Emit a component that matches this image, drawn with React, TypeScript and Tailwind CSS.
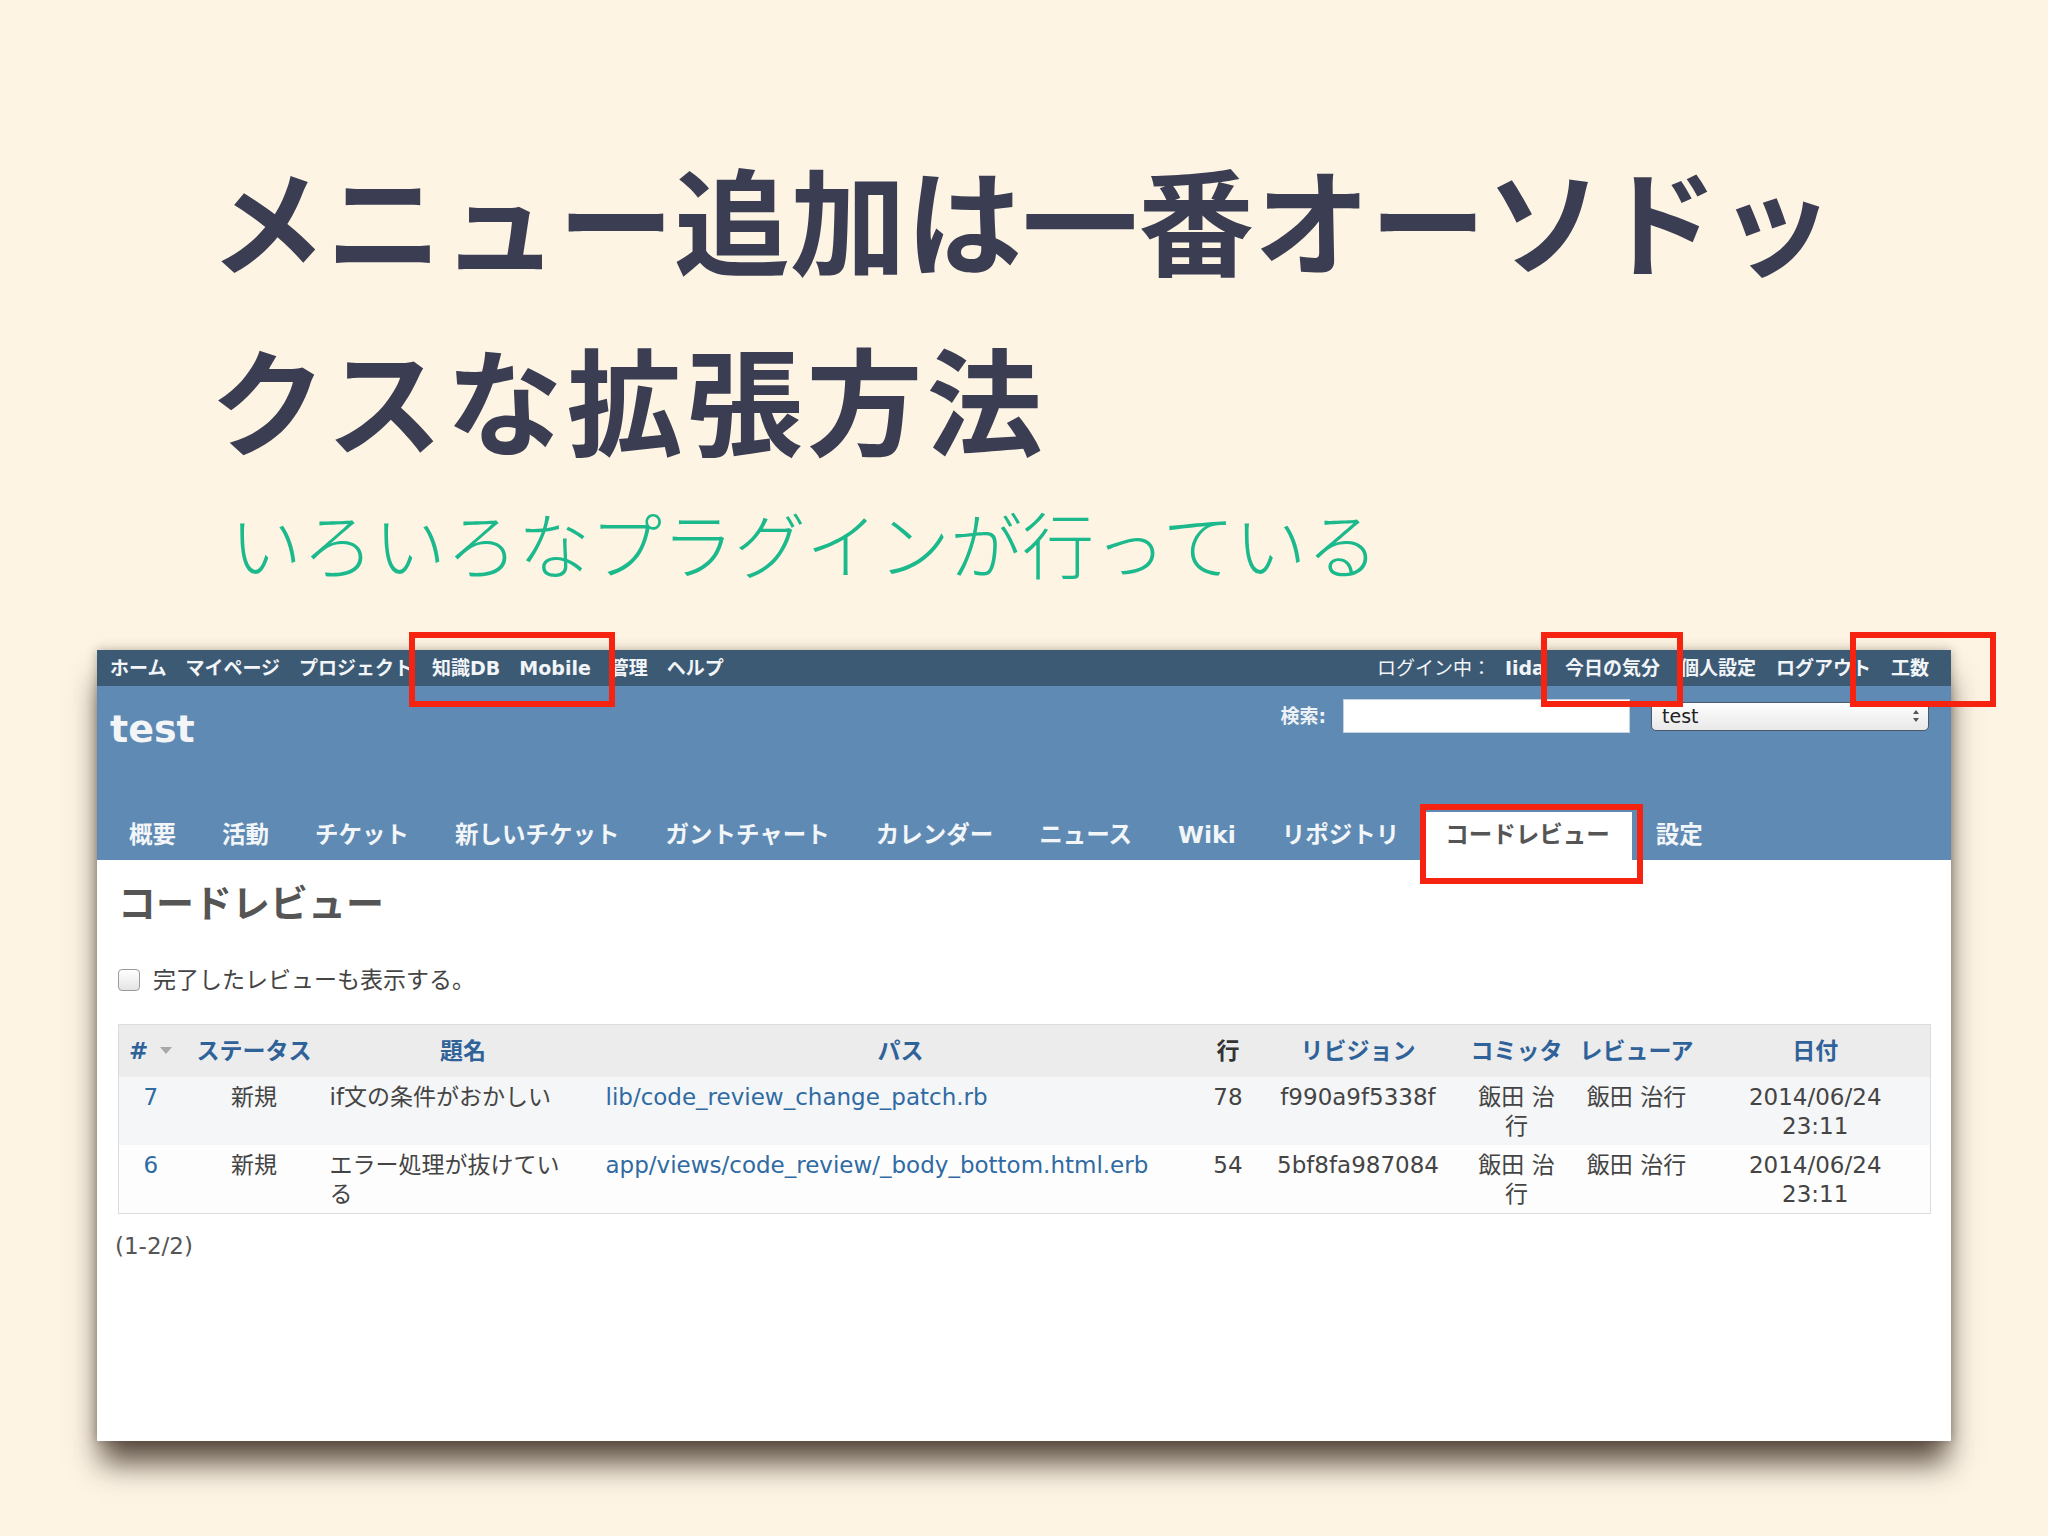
import React from 'react';

const leftMenu = ['ホーム', 'マイページ', 'プロジェクト', '知識DB', 'Mobile', '管理', 'ヘルプ'];
const rightMenu = ['今日の気分', '個人設定', 'ログアウト', '工数'];
const tabs = ['概要', '活動', 'チケット', '新しいチケット', 'ガントチャート', 'カレンダー', 'ニュース', 'Wiki', 'リポジトリ', 'コードレビュー', '設定'];

const rows = [
  { id: '7', status: '新規', subject: 'if文の条件がおかしい', path: 'lib/code_review_change_patch.rb', line: '78', rev: 'f990a9f5338f', committer: '飯田 治行', reviewer: '飯田 治行', date: '2014/06/24 23:11' },
  { id: '6', status: '新規', subject: 'エラー処理が抜けている', path: 'app/views/code_review/_body_bottom.html.erb', line: '54', rev: '5bf8fa987084', committer: '飯田 治行', reviewer: '飯田 治行', date: '2014/06/24 23:11' },
];

function RedBox({ className }: { className: string }) {
  return <div className={`absolute border-[6px] border-[#f5230f] ${className}`} />;
}

export default function App() {
  return (
    <div className="relative w-[2048px] h-[1536px] overflow-hidden bg-[#fdf4e4] font-['Noto_Sans_CJK_JP',sans-serif]">
      <div className="pl-[210px] pt-[126px]">
        <h1 className="w-[1720px] text-[116px] leading-[180px] font-bold text-[#3b3d52]">
          メニュー追加は一番オーソドッ<span className="tracking-[4px]">クスな拡張方法</span>
        </h1>
        <p className="ml-[20px] mt-[6px] text-[72px] leading-[100px] font-light text-[#1bb98b]">
          いろいろなプラグインが行っている
        </p>
      </div>

      {/* screenshot of the redmine page */}
      <div className="ml-[97px] mt-[58px] w-[1854px] h-[791px] bg-white flex flex-col shadow-[0_26px_28px_-4px_rgba(50,35,25,0.8),0_0_10px_rgba(60,45,35,0.35)] font-['DejaVu_Sans','Noto_Sans_CJK_JP',sans-serif]">
        <div className="h-[36px] bg-[#3d5a75] flex items-center justify-between pl-[13px] pr-[22px] text-[19px] text-[#f2f5f8]">
          <div className="flex items-center gap-[19px] font-bold">
            {leftMenu.map(m => <span key={m}>{m}</span>)}
          </div>
          <div className="flex items-center gap-[20px] font-bold">
            <span className="font-normal">ログイン中：<b className="ml-[14px] font-bold">Iida</b></span>
            {rightMenu.map(m => <span key={m}>{m}</span>)}
          </div>
        </div>

        <div className="h-[174px] bg-[#5f8ab3] flex flex-col">
          <div className="flex items-start justify-between">
            <div className="ml-[13px] mt-[21px] text-[38px] leading-[44px] font-bold text-[#f3f5f7]">test</div>
            <div className="flex items-center mt-[13px] pr-[22px]">
              <span className="text-[19px] font-bold text-[#eef2f6]">検索:</span>
              <div className="ml-[17px] w-[287px] h-[34px] bg-white border border-[#c8d2dc]" />
              <div className="ml-[21px] w-[278px] h-[29px] rounded-[5px] border border-[#4a5a6a] bg-gradient-to-b from-white to-[#e8e8e8] flex items-center justify-between pl-[10px] pr-[8px]">
                <span className="text-[19px] leading-[22px] text-[#222]">test</span>
                <svg width="8" height="14" viewBox="0 0 8 14">
                  <path d="M4 1 L7 5 L1 5 Z" fill="#555" />
                  <path d="M4 13 L7 9 L1 9 Z" fill="#555" />
                </svg>
              </div>
            </div>
          </div>
          <div className="mt-auto h-[48px] flex items-stretch gap-[2px] pl-[10px]">
            {tabs.map(t => (
              <div
                key={t}
                className={`px-[22px] flex items-center text-[23.5px] font-bold ${t === 'コードレビュー' ? 'bg-white text-[#555]' : 'text-[#f3f6f9]'}`}
              >
                {t}
              </div>
            ))}
          </div>
        </div>

        <div className="pl-[21px] pt-[19px] text-[#444]">
          <h2 className="h-[50px] text-[38px] leading-[50px] font-bold text-[#555]">コードレビュー</h2>
          <label className="mt-[36px] h-[30px] flex items-center">
            <span className="w-[22px] h-[22px] rounded-[4px] border border-[#9a9a9a] bg-gradient-to-b from-white to-[#e4e4e4]" />
            <span className="ml-[13px] text-[23px]">完了したレビューも表示する。</span>
          </label>

          <table className="mt-[29px] w-[1812px] table-fixed border-collapse border border-[#dcdcdc] text-[23px]">
            <colgroup>
              <col className="w-[64px]" />
              <col className="w-[143px]" />
              <col className="w-[275px]" />
              <col className="w-[600px]" />
              <col className="w-[55px]" />
              <col className="w-[205px]" />
              <col className="w-[112px]" />
              <col className="w-[128px]" />
              <col className="w-[230px]" />
            </colgroup>
            <thead>
              <tr className="h-[52px] bg-[#ececec] font-bold text-[#2f6299]">
                <th className="text-center">
                  <span className="inline-flex items-center gap-[12px]">
                    #
                    <svg width="12" height="8" viewBox="0 0 12 8"><path d="M0 0 L12 0 L6 7 Z" fill="#a8a8a8" /></svg>
                  </span>
                </th>
                <th className="text-center">ステータス</th>
                <th className="text-center">題名</th>
                <th className="text-center">パス</th>
                <th className="text-center text-[#333]">行</th>
                <th className="text-center">リビジョン</th>
                <th className="text-center">コミッタ</th>
                <th className="text-center">レビューア</th>
                <th className="text-center">日付</th>
              </tr>
            </thead>
            <tbody>
              {rows.map((r, i) => (
                <tr key={r.id} className={`align-top leading-[29px] ${i === 0 ? 'bg-[#f5f6f7] h-[68px]' : 'bg-[#fdfdfd] h-[69px]'}`}>
                  <td className="pt-[6px] pb-[4px] text-center text-[#2f6aa3]">{r.id}</td>
                  <td className="pt-[6px] text-center">{r.status}</td>
                  <td className="pt-[6px] pl-[4px]"><div className="w-[245px]">{r.subject}</div></td>
                  <td className="pt-[6px] pl-[5px] text-[#2f6aa3] whitespace-nowrap">{r.path}</td>
                  <td className="pt-[6px] text-center">{r.line}</td>
                  <td className="pt-[6px] text-center">{r.rev}</td>
                  <td className="pt-[6px]"><div className="w-[90px] mx-auto text-center">{r.committer}</div></td>
                  <td className="pt-[6px] text-center">{r.reviewer}</td>
                  <td className="pt-[6px]"><div className="w-[150px] mx-auto text-center">{r.date}</div></td>
                </tr>
              ))}
            </tbody>
          </table>

          <p className="mt-[17px] text-[23px] leading-[30px] text-[#555] -ml-[3px]">(1-2/2)</p>
        </div>
      </div>

      <RedBox className="left-[409px] top-[632px] w-[206px] h-[75px]" />
      <RedBox className="left-[1541px] top-[632px] w-[142px] h-[75px]" />
      <RedBox className="left-[1850px] top-[632px] w-[146px] h-[75px]" />
      <RedBox className="left-[1420px] top-[804px] w-[223px] h-[80px]" />
    </div>
  );
}
